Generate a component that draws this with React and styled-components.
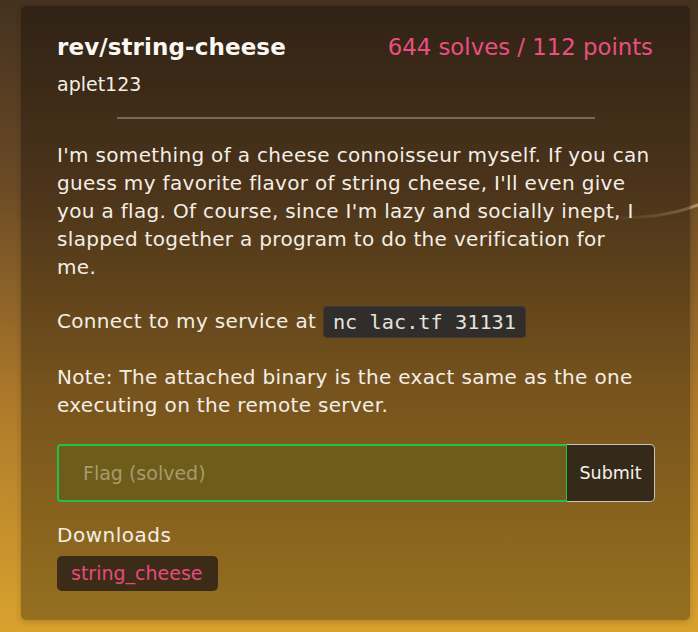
import React from 'react';
import styled, { createGlobalStyle } from 'styled-components';

const GlobalStyle = createGlobalStyle`
  html, body {
    margin: 0;
    padding: 0;
  }
  body {
    min-height: 632px;
    background: linear-gradient(180deg, #44311f 0%, #6c4b26 30%, #ab782a 62%, #d9a22e 100%);
    font-family: "DejaVu Sans", Inter, sans-serif;
    color: #f3eee6;
    overflow: hidden;
  }
`;

const Page = styled.main`
  position: relative;
  min-height: 632px;
  box-sizing: border-box;
  padding: 6px 8px 13px 21px;
`;

const Streak = styled.svg`
  position: absolute;
  top: 196px;
  right: 0;
  width: 90px;
  height: 30px;
  pointer-events: none;
`;

const Card = styled.section`
  position: relative;
  background: rgba(0, 0, 0, 0.3);
  border-radius: 5px;
  box-shadow: 0 2px 6px rgba(0, 0, 0, 0.18);
  padding: 26px 35px 29px 36px;
`;

const Header = styled.header`
  display: flex;
  justify-content: space-between;
  align-items: baseline;
  line-height: 30px;
`;

const Title = styled.h1`
  margin: 0;
  font-size: 23px;
  font-weight: 700;
  letter-spacing: 0.1px;
  color: #fbf8f3;
`;

const Stats = styled.span`
  font-size: 22.8px;
  color: #ea4f82;
  margin-right: 2px;
`;

const Author = styled.div`
  margin-top: 10px;
  font-size: 19px;
  line-height: 24px;
`;

const Rule = styled.hr`
  width: 80%;
  margin: 21px auto 22px;
  border: 0;
  border-top: 2px solid rgba(190, 175, 155, 0.45);
`;

const Para = styled.p`
  margin: 0 0 25px;
  font-size: 20px;
  line-height: 28px;
  letter-spacing: 0.33px;
  white-space: ${(p) => (p.$broken ? 'nowrap' : 'normal')};
`;

const Code = styled.code`
  display: inline-block;
  font-family: "DejaVu Sans Mono", monospace;
  font-size: 20.3px;
  line-height: 30px;
  padding: 0 9px;
  background: #302d2a;
  border: 1px solid #3c3834;
  border-radius: 4px;
  color: #e4e2df;
  vertical-align: middle;
  letter-spacing: 0;
`;

const FlagForm = styled.form`
  display: flex;
  height: 58px;
`;

const FlagInput = styled.input`
  flex: 1;
  min-width: 0;
  height: 58px;
  box-sizing: border-box;
  border: 2px solid #22c04c;
  border-right-width: 1.5px;
  border-radius: 4px 0 0 4px;
  background: #6e5c1b;
  padding: 0 24px;
  font-family: inherit;
  font-size: 19px;
  color: #f3eee6;
  outline: none;

  &::placeholder {
    color: #a99a6c;
  }
`;

const SubmitButton = styled.button`
  width: 88px;
  height: 58px;
  padding: 0;
  box-sizing: border-box;
  border: 1px solid #c9c4bb;
  border-left: 0;
  border-radius: 0 5px 5px 0;
  background: #35291a;
  color: #f6f2ec;
  font-family: inherit;
  font-size: 17.5px;
  cursor: pointer;
`;

const SectionLabel = styled.h2`
  margin: 19px 0 7px;
  font-size: 20px;
  line-height: 28px;
  font-weight: 400;
  letter-spacing: 0.5px;
`;

const FileChip = styled.a`
  display: inline-block;
  padding: 4px 15px 4px 14px;
  line-height: 27px;
  font-size: 19px;
  border-radius: 5px;
  background: #3b2b17;
  color: #e84a7f;
  text-decoration: none;
`;

export default function App() {
  return (
    <>
      <GlobalStyle />
      <Page>
        <Streak viewBox="0 0 90 30">
          <defs>
            <linearGradient id="streakFade" x1="0" x2="1" y1="0" y2="0">
              <stop offset="0" stopColor="#ffe8c4" stopOpacity="0" />
              <stop offset="0.6" stopColor="#ffe8c4" stopOpacity="0.25" />
              <stop offset="1" stopColor="#ffe8c4" stopOpacity="0.45" />
            </linearGradient>
          </defs>
          <path
            d="M0 22 C 35 22, 62 20, 90 9"
            stroke="url(#streakFade)"
            strokeWidth="3"
            fill="none"
            strokeLinecap="round"
          />
        </Streak>
        <Card>
          <Header>
            <Title>rev/string-cheese</Title>
            <Stats>644 solves / 112 points</Stats>
          </Header>
          <Author>aplet123</Author>
          <Rule />
          <Para $broken>
            I'm something of a cheese connoisseur myself. If you can
            <br />
            guess my favorite flavor of string cheese, I'll even give
            <br />
            you a flag. Of course, since I'm lazy and socially inept, I
            <br />
            slapped together a program to do the verification for
            <br />
            me.
          </Para>
          <Para>
            Connect to my service at <Code>nc lac.tf 31131</Code>
          </Para>
          <Para>
            Note: The attached binary is the exact same as the one executing on the remote server.
          </Para>
          <FlagForm onSubmit={(e) => e.preventDefault()}>
            <FlagInput placeholder="Flag (solved)" />
            <SubmitButton type="submit">Submit</SubmitButton>
          </FlagForm>
          <SectionLabel>Downloads</SectionLabel>
          <FileChip href="#">string_cheese</FileChip>
        </Card>
      </Page>
    </>
  );
}
